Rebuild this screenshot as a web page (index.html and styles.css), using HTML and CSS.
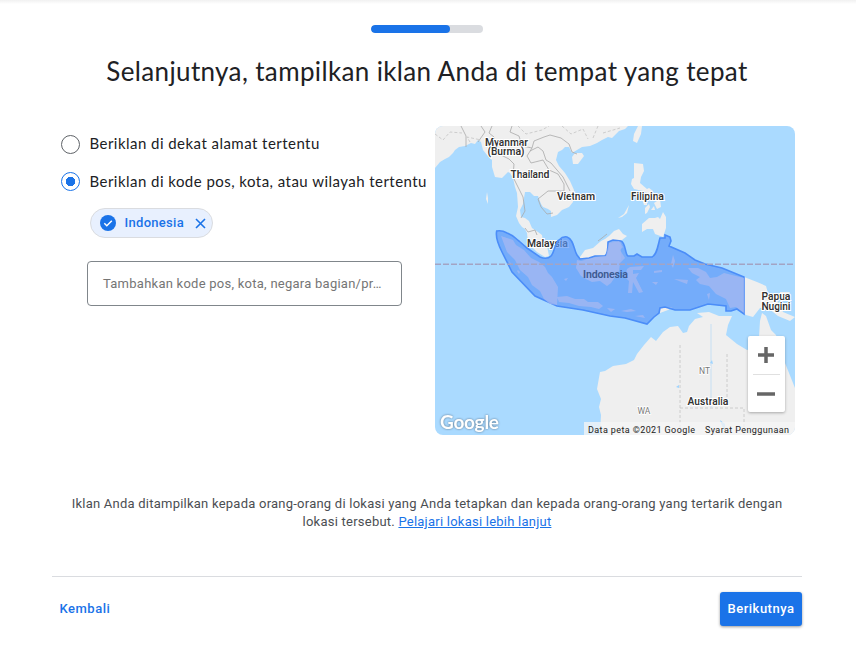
FILE: index.html
```html
<!DOCTYPE html>
<html lang="id">
<head>
<meta charset="utf-8">
<title>Lokasi iklan</title>
<link rel="stylesheet" href="styles.css">
</head>
<body>
<main class="page">
  <div class="progress"><div class="progress-fill"></div></div>
  <h1><span>Selanjutnya, tampilkan iklan Anda di tempat yang tepat</span></h1>
  <div class="content">
    <section class="options">
      <label class="option"><i class="radio"></i><span class="label-a">Beriklan di dekat alamat tertentu</span></label>
      <label class="option second"><i class="radio checked"></i><span class="label-b">Beriklan di kode pos, kota, atau wilayah tertentu</span></label>
      <div class="chip">
        <svg width="16" height="16" viewBox="0 0 16 16"><circle cx="8" cy="8" r="8" fill="#1a73e8"/><path d="M4.3 8.3l2.5 2.4 5-5" fill="none" stroke="#fff" stroke-width="1.5"/></svg>
        <span>Indonesia</span>
        <svg class="close" width="11" height="11" viewBox="0 0 11 11"><path d="M1 1l9 9M10 1l-9 9" stroke="#1a73e8" stroke-width="1.6"/></svg>
      </div>
      <div class="field"><span>Tambahkan kode pos, kota, negara bagian/pr…</span></div>
    </section>
    <section class="map">
      <svg class="map-art" width="360" height="309" viewBox="0 0 360 309">
        <rect width="360" height="309" fill="#aadaff"/>
        <g fill="#efefef">
          <path d="M0 0V42L5 36 10 33 14 31 18 27 20 24 24 21 30 20 36 17 40 18 43 14 46 16 48 24 52 29 57 34 57 41 60 51 67 52 71 48 73 46 75 47 78 52 80 61 82 67 83 81 81 90 84 97 87 101 90 103 92 107 93 117 97 121 102 126 110 131 114 130 112 120 108 116 107 109 103 106 97 102 94 95 90 92 86 91 85 84 88 78 90 66 95 66 99 70 103 70 106 78 108 81 113 83 116 85 116 91 122 89 127 84 134 81 138 76 139 64 135 55 130 47 124 40 121 34 123 26 127 24 130 21 134 21 137 27 142 24 147 21 155 20 162 17 167 14 173 11 177 12 184 5 190 3 193 0Z"/>
          <path d="M137 31l3-4 7 0 2 3-6 8-5 0zM198 15l1-7 4-8 4 0-1 8-4 9zM52 66l1 6 0 6-2-5zM199 37l9 1 1 7-3 6-1 6 7 6-4 2-9-2-3-5 1-5 2-1zM183 92l6-4 5-9-2 8-5 4zM208 65l6-3 4 3-2 4zM207 73l5 2 0 4-3 0zM210 82l4-4 1 3-3 6-2 1zM216 84l3-4 1 4zM219 77l6-4 1 8-4 2zM207 98l7-6 6 0 3-1 2 2 3-7 3 5 0 11-3 9-8-3-2-5-6 0-5 3z"/>
          <path d="M145 131l5-7 8-2 8-7 4-2 4-3 5-5 5-2 4 5 4 2-5 4-1 6v14h-41z"/>
          <path d="M309 151l13 5 9 4 2 7 8 5 7 14 12 5-5 4-12-5-10-8-8 0-7 9-7-2-3-2z"/>
          <path d="M345 166l10 0-2 3-8-1zM225 181l13 0-5 3-8 3z"/>
          <path d="M165 309l1-20-2-8 2-8-4-10 3-17 5-1 8-5 13-2 8-4 3-6 7-9 7-8 5 4 7-9 7-5 8-1 5 7 4-1 2-6 6-7 8-2-6-4 12-1 10 4 13 0-4 9-2 10 11 9 10 6 7-2 5-11 1-16 2-8 4 3 5 14 5 5 5 18 14 35 10 10V309z"/>
        </g>
        <g fill="none" stroke="#aaa" stroke-width=".8">
          <path d="M26 0l5 10 0 11M46 0l4 6-7 10M57 0l-3 7 5 4 3 16 12 6 5 5-1 13 6 12 4 8 2 14-4 7M77 0l-2 6 9 4 3 10 10 2 2-7 10-4 6-2 11 3 8 6 3 8 5 2M97 22l-5 8 4 7 12-3 6 10 9 4 6 10 0 7-16 0-10 8 3 8 6 7 6-1M95 25l8-4 5 4 3 9 5 3 12 14 7 14M90 102l3 4 7-2 2 5M163 115l4-3 5-4"/>
        </g>
        <path fill="none" stroke="#c4c4c4" stroke-width=".8" stroke-dasharray="3 2" d="M0 8l8 6 7-8 12 1M35 16l-3-5 14 3M83 0l8 8 16-4 7-4M127 0l9 8 12-5 5 10M163 0l-5 12M168 7l17-5M245 219V309M292 228v43M245 282h64v27"/>
        <path stroke="#c6dff3" d="M276 198v84"/>
        <path fill="#9fd4ff" d="M241 261l3-2 0 3zM275 237l2-3 1 4zM287 300l-2-6 5 4 0 5z"/>
        <g class="country"><text x="92" y="121" textLength="41">Malaysia</text></g>
        <path class="indonesia" d="M61.7 105Q67 104 72 107C78 109 80 112 84 115L92 122 105 131Q112 134 116 130C120 126 120 115 124 114Q128 110 132 111C139 113 139 125 142 129L145 133 154 132 160 130 170 129.7Q173 128 173 116L178 114 186 115C191 117 190 129 193 130L199 130 202 128 207 131H217C222 129 223 119 225 112H230L230 109 235 111 236 115 234 120 250 127 260 134 270 138 287 142 309 151V188L302 183 296 185 291 185V180L273 178 255 184 240 184 230 181 225 182 224 187 219 191 212 198 190 192 175 190 148 184 122 180 100 170 77 146 67 126Q60 112 61.7 105Z"/>
        <g fill="#a8b9f1" opacity=".72">
          <path d="M66 110l12 4 3 5 8 5 7 8 8 4 6 5 3 6 4 4 6 10-1 18-7-1-6-5-4-8-8-6-4-8-8-7-5-10-8-8zM142 134l4 1 15-4 10-1 3-13 10-2 4 6-3 3 5 8-5 5-1 8-8 12-4 3-7-5-8 1-6-3-5-3-5-8zM122 171l10-1 8 3 9 0 4 3 10 0 5 4-4 3-8-2-12-1-10-3-10-1zM83 144l2 2-1 2-2-3zM74 135l3 4-2-1zM129 153l4-1-2 3z"/>
          <path d="M192 143l3-2 14-1-3 4-8 0 0 4 6-1-3 5 7 14-4 1-6-11-1 11-4 0 1-12-4-4zM253 142l10 0 8 4 4 6 7-1 7-4 20 5v35l-8-6-6 1-4-9-10-5-7-8-9-2-4-4 4-3-8-4zM239 153l14 1-1 4-8-3zM238 129l2 6-2 7-2-4zM217 156l6 0-2 3zM219 145l8-1 0 2-8 1zM172 182l8 1-4 3zM186 185l10-2 5 2-9 1zM200 190l8-1 2 3zM272 168l3-1-1 7z"/>
        </g>
        <path d="M0 138.300H360" stroke="#a3a4c4" stroke-width="1.400" stroke-dasharray="6 2"/>
        <g class="country">
          <text x="50" y="20" textLength="43">Myanmar</text><text x="52.500" y="29" textLength="37">(Burma)</text>
          <text x="75.500" y="52" textLength="39">Thailand</text><text x="122" y="74" textLength="38">Vietnam</text>
          <text x="196" y="74" textLength="33">Filipina</text>
          <text x="326.500" y="174" textLength="29">Papua</text><text x="326.500" y="183.500" textLength="29">Nugini</text>
          <text x="252.500" y="279" textLength="41">Australia</text>
        </g>
        <text class="inside" x="148" y="151.500" textLength="45">Indonesia</text>
        <text class="state" x="264" y="248">NT</text><text class="state" x="202.500" y="288">WA</text>
        <rect x="149" y="296" width="211" height="13" fill="#f5f5f5" opacity=".75"/>
        <g class="legal"><text x="153" y="307" textLength="107">Data peta ©2021 Google</text><text x="270" y="307" textLength="84">Syarat Penggunaan</text></g>
        <text class="brand" x="5" y="302.500" textLength="59">Google</text>
      </svg>
      <div class="zoom"><button aria-label="Perbesar"><svg width="18" height="18" viewBox="0 0 18 18"><path d="M9 1v16M1 9h16" stroke="#666" stroke-width="3.500"/></svg></button><hr><button aria-label="Perkecil"><svg width="18" height="18" viewBox="0 0 18 18"><path d="M0 10h18" stroke="#666" stroke-width="3.500"/></svg></button></div>
    </section>
  </div>
  <p class="note"><span class="note-a">Iklan Anda ditampilkan kepada orang-orang di lokasi yang Anda tetapkan dan kepada orang-orang yang tertarik dengan</span><br><span class="note-b">lokasi tersebut. <a>Pelajari lokasi lebih lanjut</a></span></p>
  <footer><a class="back">Kembali</a><button class="next">Berikutnya</button></footer>
</main>
</body>
</html>
```
FILE: styles.css
```css
* { box-sizing: border-box; }
body { margin: 0; background: #fff; color: #202124; font-family: Roboto, sans-serif; }
.page { height: 646px; padding: 25px 54px 0 52px; overflow: hidden; background: linear-gradient(#f1f1f1, #fff 4px); }
.progress { width: 112px; height: 8px; margin-left: 319px; border-radius: 4px; background: #dadce0; overflow: hidden; }
.progress-fill { width: 79px; height: 8px; border-radius: 4px; background: #1a73e8; }
h1 { margin: 20px 0 0; height: 36px; text-align: center; font: 400 26px/36px Lato, sans-serif; letter-spacing: .36px; white-space: nowrap; }
.content { display: flex; justify-content: space-between; margin-top: 37px; height: 309px; padding: 0 7px 0 9px; }
.options { width: 374px; flex: none; padding-top: 8px; }
.option { display: flex; align-items: center; height: 20px; gap: 9.500px; font: 400 15px/20px Lato, sans-serif; letter-spacing: .46px; white-space: nowrap; }
.label-a { margin-top: -2px; }
.option.second { margin-top: 17px; }
.radio { width: 19px; height: 19px; flex: none; border: 1px solid #5f6368; border-radius: 50%; }
.radio.checked { border: 1.500px solid #1a73e8; background: radial-gradient(circle, #1a73e8 4.500px, #fff 5px); }
.chip { display: flex; align-items: center; width: 123px; height: 30px; margin: 17px 0 0 29px; padding-left: 9px; border: 1px solid #dadce0; border-radius: 15px; background: #e8f0fe; color: #1a73e8; font-size: 13px; font-weight: 500; letter-spacing: .3px; }
.chip span { width: 70px; margin: -1px 0 0 8.500px; flex: none; }
.field { display: flex; align-items: center; width: 315px; height: 45px; margin: 23px 0 0 26px; padding-left: 15px; border: 1px solid #80868b; border-radius: 4px; color: #757575; font-size: 13px; letter-spacing: .25px; white-space: nowrap; }
.map { position: relative; width: 360px; height: 309px; flex: none; border-radius: 8px; overflow: hidden; }
.map-art { display: block; }
.map text { font-family: Roboto, sans-serif; }
.indonesia { fill: #5a97f7; fill-opacity: .68; stroke: #4b8df8; stroke-width: 1.600; }
.country text { font-size: 10.500px; font-weight: 600; fill: #333; stroke: #fff; stroke-width: 2px; paint-order: stroke; }
.map .inside { font-size: 10.500px; font-weight: 600; fill: #3c5990; }
.map .state { font-size: 8.500px; fill: #777; stroke: #fff; stroke-width: 1.500px; paint-order: stroke; }
.legal text { font-size: 9px; fill: #222; }
.map .brand { font-family: Lato, sans-serif; font-size: 19px; font-weight: 700; fill: #fff; filter: drop-shadow(0 0 1px #5d7890); }
.zoom { position: absolute; right: 10px; bottom: 23px; width: 37px; height: 76px; border-radius: 2px; background: #fff; box-shadow: 0 1px 3px rgba(0,0,0,.3); }
.zoom button { display: grid; place-items: center; width: 36px; height: 38px; padding: 0; border: 0; background: none; }
.zoom hr { height: 1px; margin: 0 5px -1px; border: 0; background: #e0e0e0; }
.note { height: 36px; margin: 60px 0 0; text-align: center; font-size: 13px; line-height: 18px; white-space: nowrap; letter-spacing: .235px; color: #4b4e52; }
.note a { color: #1a73e8; text-decoration: underline; }
footer { display: flex; justify-content: space-between; width: 750px; margin-top: 45px; padding: 15px 0 0 7.500px; border-top: 1px solid #dadce0; font: 500 13px/34px Roboto, sans-serif; letter-spacing: .5px; }
.back { color: #1a73e8; }
.next { width: 82px; height: 34px; padding: 0; border: 0; border-radius: 3px; background: #1a73e8; color: #fff; font: inherit; letter-spacing: inherit; box-shadow: 0 1px 3px rgba(0,0,0,.4); }
```
